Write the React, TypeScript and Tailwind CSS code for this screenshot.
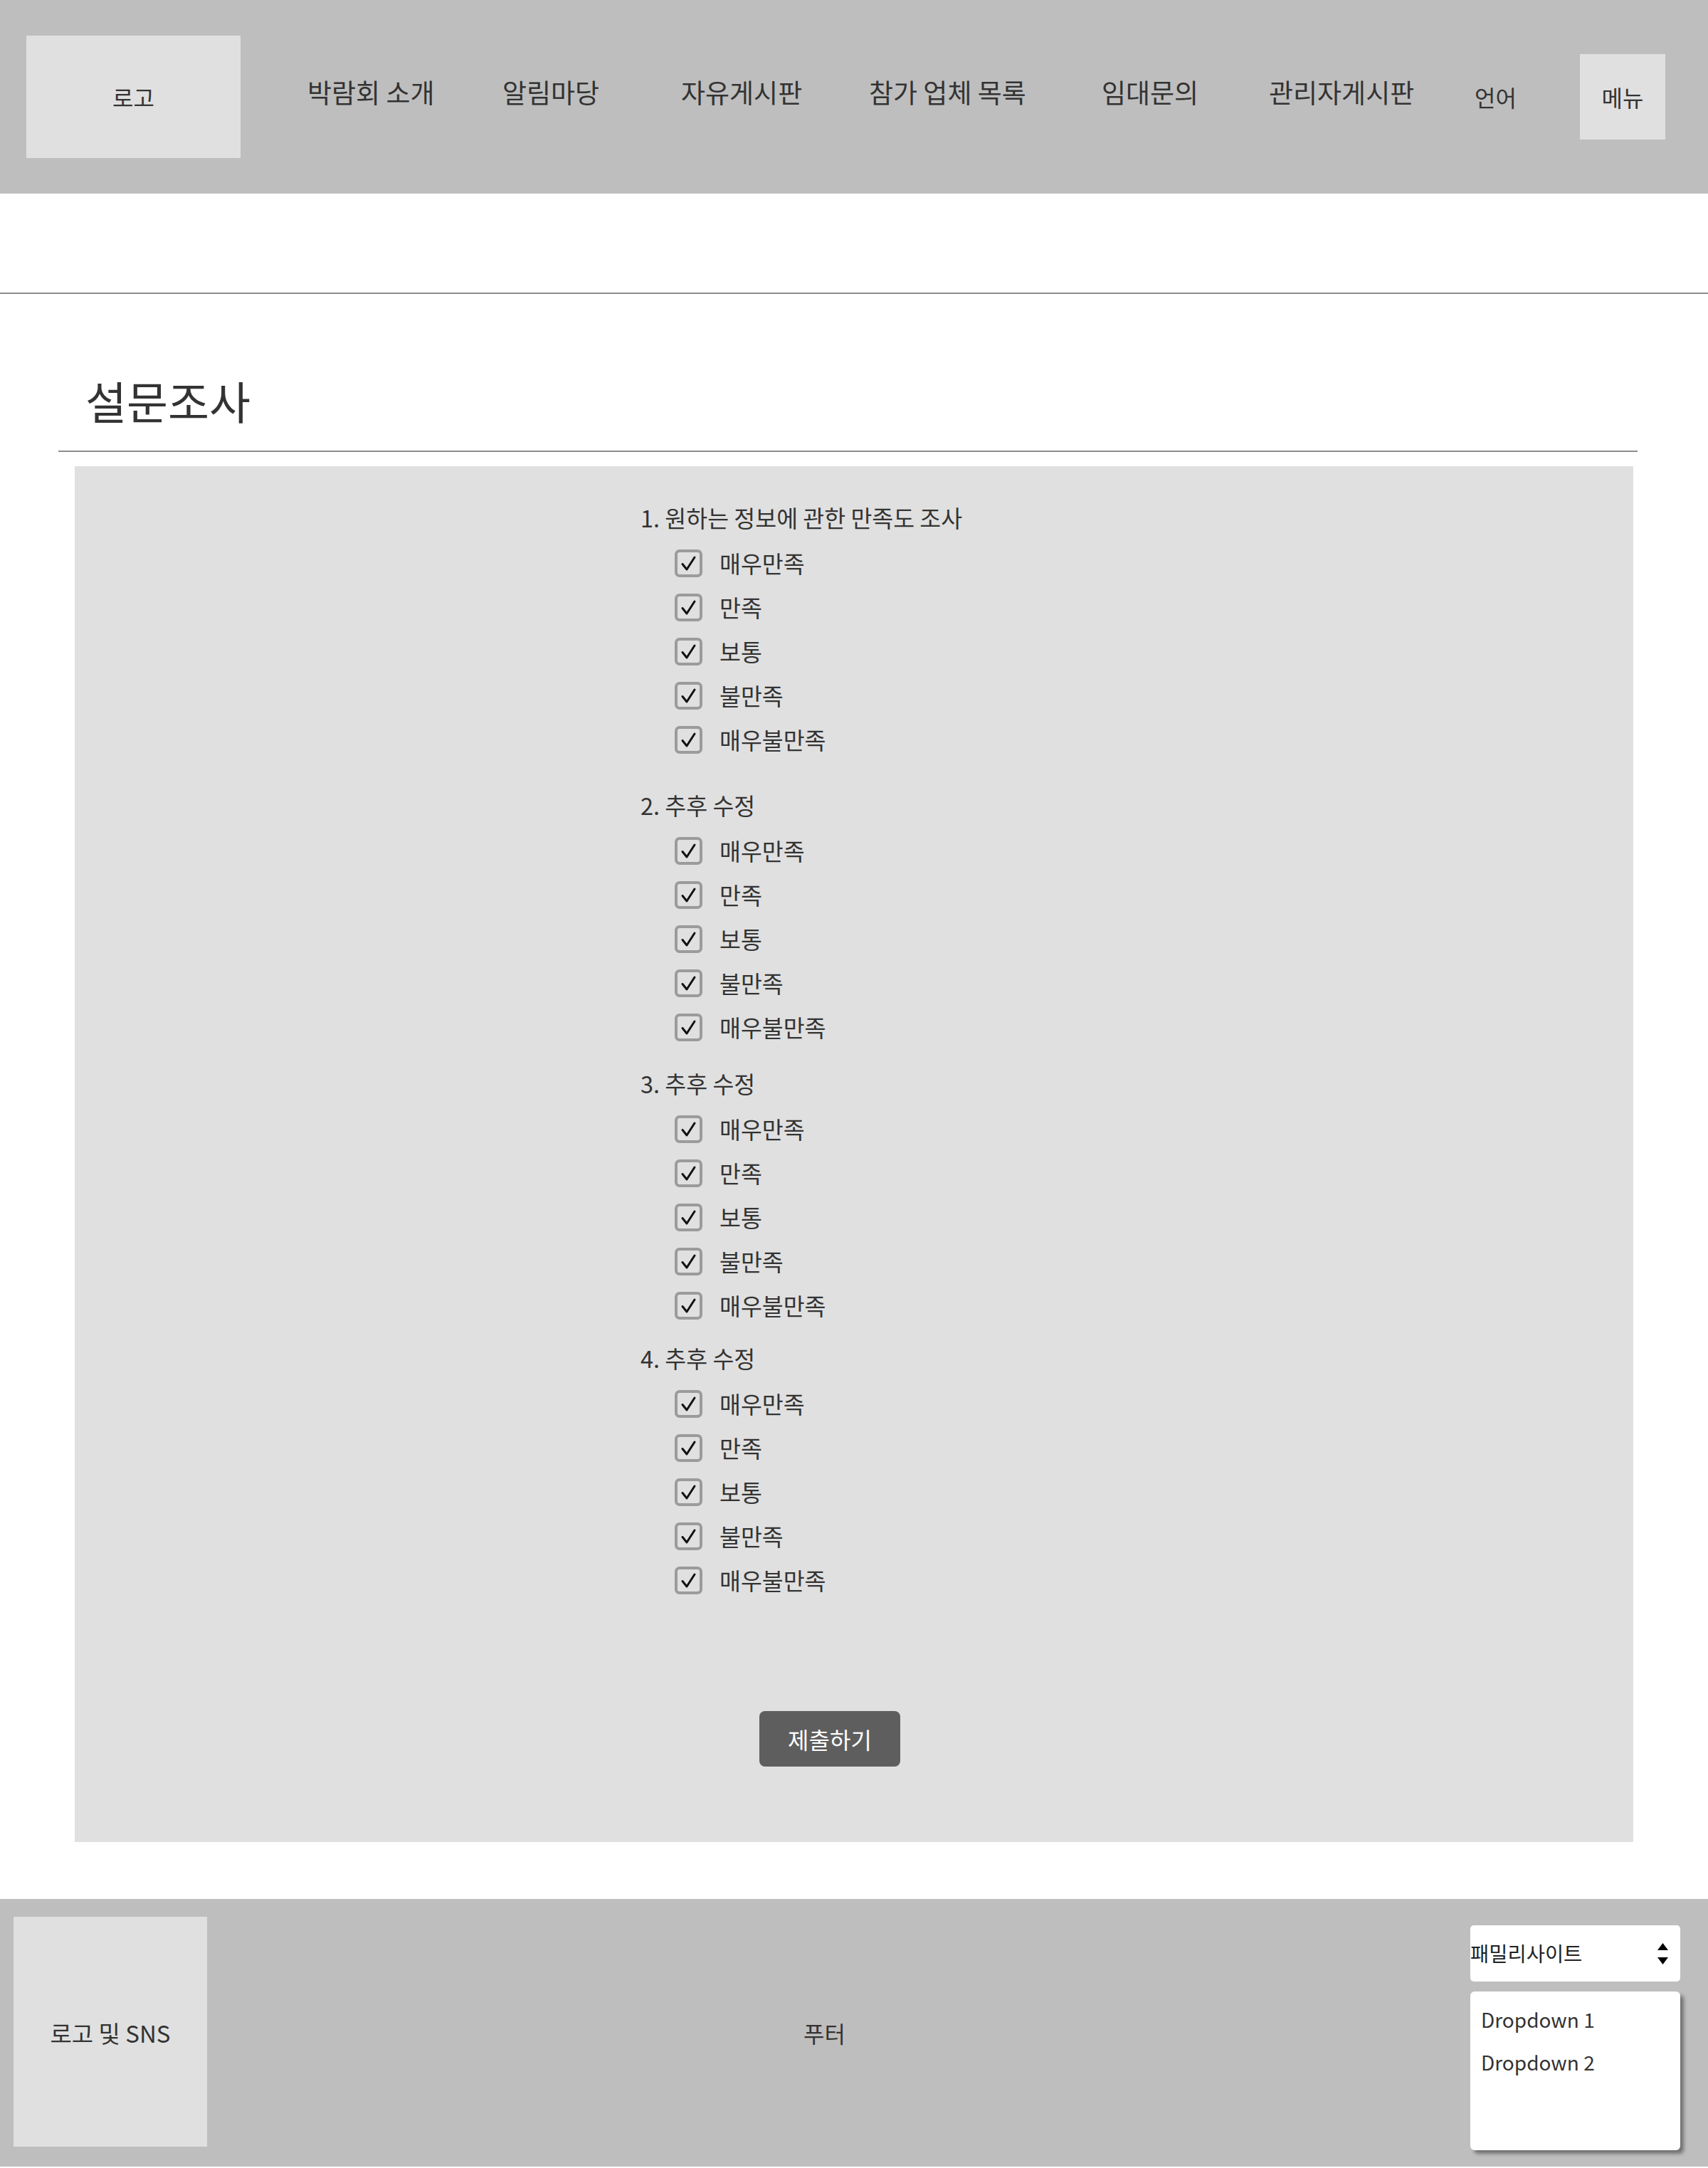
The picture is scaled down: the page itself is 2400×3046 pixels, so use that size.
const navItems = [
  { label: "박람회 소개", w: "w-[274px]" },
  { label: "알림마당", w: "w-[251px]" },
  { label: "자유게시판", w: "w-[264px]" },
  { label: "참가 업체 목록", w: "w-[327px]" },
  { label: "임대문의", w: "w-[235px]" },
  { label: "관리자게시판", w: "w-[289px]" },
];

const questions = [
  { title: "1. 원하는 정보에 관한 만족도 조사", gap: "" },
  { title: "2. 추후 수정", gap: "mt-[41px]" },
  { title: "3. 추후 수정", gap: "mt-[28px]" },
  { title: "4. 추후 수정", gap: "mt-[23px]" },
];

const options = ["매우만족", "만족", "보통", "불만족", "매우불만족"];

function CheckBox() {
  return (
    <span className="flex h-[39px] w-[39px] shrink-0 items-center justify-center rounded-[7px] border-[4px] border-[#9b9b9b]">
      <svg width="31" height="31" viewBox="0 0 31 31" fill="none">
        <path
          d="M7 16.5L13 24L24 7"
          stroke="#111"
          strokeWidth="3"
          strokeLinecap="round"
          strokeLinejoin="round"
        />
      </svg>
    </span>
  );
}

export default function App() {
  return (
    <div className="w-[2400px] min-h-[3046px] bg-white text-[#333] font-['Noto_Sans_CJK_KR',sans-serif]">
      {/* header */}
      <header className="flex h-[272px] items-center bg-[#bebebe] pl-[37px]">
        <div className="flex h-[172px] w-[301px] items-center justify-center bg-[#e0e0e0] text-[32px]">
          로고
        </div>
        <nav className="ml-[94px] flex items-center">
          {navItems.map((item) => (
            <a key={item.label} className={`${item.w} mb-3 text-[37px] whitespace-nowrap`}>
              {item.label}
            </a>
          ))}
          <span className="w-[148px] text-[32px]">언어</span>
          <button className="flex h-[120px] w-[120px] items-center justify-center bg-[#e0e0e0] text-[32px]">
            메뉴
          </button>
        </nav>
      </header>

      <div className="h-[141px] border-b-2 border-[#8c8c8c]" />

      <main className="ml-[82px] mr-[99px]">
        <h1 className="mt-[109px] border-b-2 border-[#8c8c8c] pb-[31px] pl-[38px] text-[63px] leading-[80px]">
          설문조사
        </h1>

        <section className="ml-[23px] mr-[6px] mt-[20px] h-[1933px] bg-[#e0e0e0] pl-[795px] pt-[52px]">
          {questions.map((q) => (
            <div key={q.title} className={q.gap}>
              <p className="h-[40px] text-[32.5px] leading-[40px]">{q.title}</p>
              <ul className="mt-[13px] pl-[48px]">
                {options.map((opt) => (
                  <li key={opt} className="flex h-[62px] items-center gap-[24px] text-[32.5px]">
                    <CheckBox />
                    <span>{opt}</span>
                  </li>
                ))}
              </ul>
            </div>
          ))}
          <button className="ml-[167px] mt-[153px] h-[78px] w-[198px] rounded-[8px] bg-[#5e5e5e] text-[32px] text-white">
            제출하기
          </button>
        </section>
      </main>

      {/* footer */}
      <footer className="mt-[80px] flex h-[376px] bg-[#bebebe]">
        <div className="ml-[19px] mt-[25px] flex h-[323px] w-[272px] items-center justify-center bg-[#e0e0e0] pt-[4px] text-[33px]">
          로고 및 SNS
        </div>
        <div className="flex flex-1 items-center justify-center pr-[40px] text-[32px]">푸터</div>
        <div className="mr-[39px] w-[295px] pt-[37px]">
          <div className="flex h-[79px] items-center justify-between rounded-[5px] bg-white pr-[17px] text-[28.5px] text-[#222]">
            <span>패밀리사이트</span>
            <svg width="15" height="36" viewBox="0 0 15 36">
              <path d="M7.5 3L15 13H0Z" fill="#000" />
              <path d="M0 23H15L7.5 33Z" fill="#000" />
            </svg>
          </div>
          <ul className="mt-[14px] h-[223px] rounded-[6px] bg-white pl-[15px] pt-[9px] text-[28px] shadow-[5px_5px_5px_rgba(0,0,0,0.4)]">
            <li className="leading-[60px]">Dropdown 1</li>
            <li className="leading-[60px]">Dropdown 2</li>
          </ul>
        </div>
      </footer>
    </div>
  );
}
